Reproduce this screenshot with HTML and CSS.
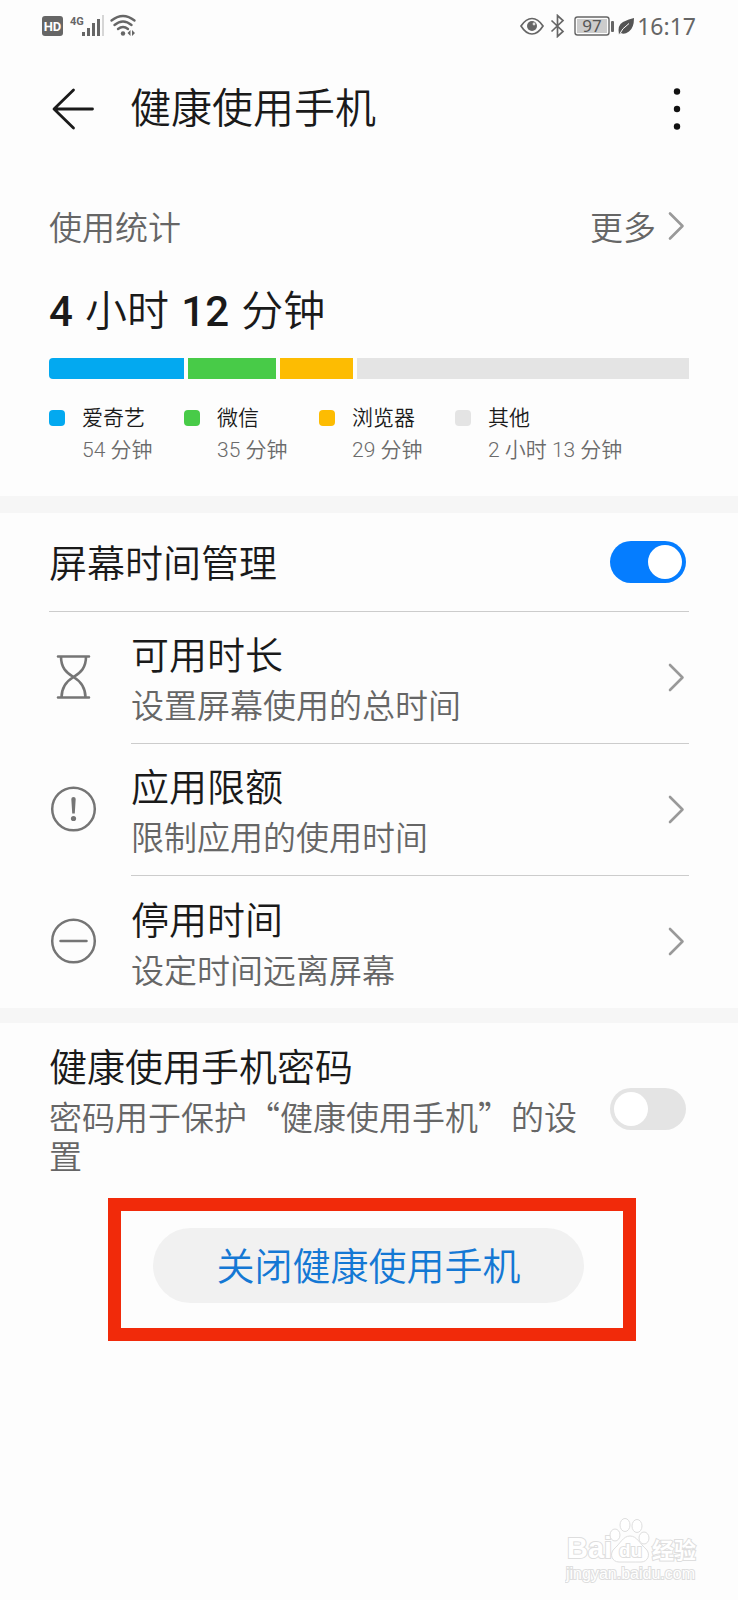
FILE: index.html
```html
<!DOCTYPE html>
<html lang="zh-CN">
<head>
<meta charset="utf-8">
<meta name="viewport" content="width=device-width, initial-scale=1">
<title>健康使用手机</title>
<link rel="stylesheet" href="styles.css">
</head>
<body>
<div class="screen">
  <div class="status">
    <div class="status-group">
      <svg class="icon" width="94" height="24" viewBox="0 0 94 24">
        <rect x="0" y="2" width="21" height="20" rx="3" fill="#666"/>
        <text class="hd-label" x="10.500" y="17" text-anchor="middle">HD</text>
        <text class="net-label" x="28" y="11">4G</text>
        <g fill="#666">
          <rect x="40" y="18" width="3" height="4"/><rect x="45" y="14" width="3" height="8"/>
          <rect x="50" y="9" width="3" height="13"/><rect x="55" y="5" width="3" height="17"/>
          <rect x="60" y="1" width="2" height="21" fill="#d6d6d6"/>
          <circle cx="81" cy="19.500" r="2.200"/>
          <path d="M88.500 16v6l-3-3zM90 16v6l3-3z"/>
        </g>
        <path d="M69.500 6.500q11.500-9 23 0M72.500 11q8.500-7 17 0M76 15q5-4 10 0" fill="none" stroke="#666" stroke-width="2.300" stroke-linecap="round"/>
      </svg>
    </div>
    <div class="status-group">
      <svg class="icon" width="115" height="24" viewBox="0 0 115 24">
        <g fill="none" stroke="#666" stroke-width="1.700">
          <path d="M1 12Q6 4.500 12 4.500T23 12Q18 20 12 20T1 12z"/>
          <path d="M31.500 6.500L43 17.500L37.500 22.500V1.500L43 6.500L31.500 17.500"/>
          <rect x="55" y="3" width="34" height="18" rx="2.500" stroke-width="1.400"/>
        </g>
        <circle cx="12" cy="12" r="5" fill="#666"/><circle cx="14" cy="10" r="1.400" fill="#ddd"/>
        <rect x="57" y="5" width="30" height="14" fill="#ccc"/>
        <text class="battery-label" x="72" y="18" text-anchor="middle">97</text>
        <rect x="91" y="7" width="3" height="11" rx="1" fill="#666"/>
        <path d="M99 21Q97 11 103 8T114 4Q114 14 109 17.500T101 19z" fill="#555"/>
        <path d="M98.500 22Q102 14 109 9.500" fill="none" stroke="#fdfdfd" stroke-width="1"/>
      </svg>
      <span class="clock">16:17</span>
    </div>
  </div>

  <header class="header">
    <button class="icon-button" type="button" aria-label="返回">
      <svg class="icon" width="46" height="44" viewBox="0 0 46 44" fill="none" stroke="#1a1a1a" stroke-width="2.800" stroke-linecap="round" stroke-linejoin="round"><path d="M24.500 3L5 22L24.500 41M5.500 22H43.500"/></svg>
    </button>
    <h1 class="title">健康使用手机</h1>
    <button class="icon-button" type="button" aria-label="更多选项">
      <svg class="icon" width="24" height="44" viewBox="0 0 24 44" fill="#111"><circle cx="12" cy="4.500" r="3.200"/><circle cx="12" cy="22" r="3.200"/><circle cx="12" cy="39.500" r="3.200"/></svg>
    </button>
  </header>

  <main>
    <section class="stats">
      <div class="stats-head">
        <h2 class="stats-label">使用统计</h2>
        <a class="more" href="#more">更多
          <svg class="icon" width="18" height="30" viewBox="0 0 18 30"><path class="chevron" d="M3 2.500L15.500 15L3 27.500"/></svg>
        </a>
      </div>
      <p class="total"><b>4</b> 小时 <b>12</b> 分钟</p>
      <div class="bar">
        <span class="segment blue" style="flex-grow: 135"></span>
        <span class="segment green" style="flex-grow: 88"></span>
        <span class="segment amber" style="flex-grow: 73"></span>
        <span class="segment gray" style="flex-grow: 332"></span>
      </div>
      <ul class="legend">
        <li class="legend-item"><i class="swatch blue"></i><span class="app">爱奇艺</span><span class="time">54 分钟</span></li>
        <li class="legend-item"><i class="swatch green"></i><span class="app">微信</span><span class="time">35 分钟</span></li>
        <li class="legend-item"><i class="swatch amber"></i><span class="app">浏览器</span><span class="time">29 分钟</span></li>
        <li class="legend-item"><i class="swatch gray"></i><span class="app">其他</span><span class="time">2 小时 13 分钟</span></li>
      </ul>
    </section>

    <section class="manage">
      <div class="manage-head">
        <label class="item-title" for="screen-time">屏幕时间管理</label>
        <input class="switch" id="screen-time" type="checkbox" role="switch" checked>
      </div>
      <a class="row" href="#duration">
        <svg class="icon" width="48" height="48" viewBox="0 0 48 48" fill="none" stroke="#757575" stroke-width="2.600" stroke-linecap="round"><path d="M9 2.500H40M9 43.500H40M12 2.500C12 13.500 17 18.500 24.500 23C32 27.500 36.500 33.500 36.500 43.500M37 2.500C37 13.500 32 18.500 24.500 23C17 27.500 12.500 33.500 12.500 43.500"/></svg>
        <span class="row-body">
          <span class="row-text"><span class="item-title">可用时长</span><span class="item-note">设置屏幕使用的总时间</span></span>
          <svg class="icon" width="18" height="30" viewBox="0 0 18 30"><path class="chevron" d="M3 2L15.500 14.500L3 27"/></svg>
        </span>
      </a>
      <a class="row" href="#limits">
        <svg class="icon" width="48" height="48" viewBox="0 0 48 48" fill="none" stroke="#757575" stroke-width="2.500"><circle cx="24.500" cy="23" r="21.300"/><path d="M22.300 13Q22.300 11 24.500 11T26.700 13L25.800 27.500H23.200z" fill="#757575" stroke="none"/><circle cx="24.500" cy="32.500" r="2.600" fill="#757575" stroke="none"/></svg>
        <span class="row-body">
          <span class="row-text"><span class="item-title">应用限额</span><span class="item-note">限制应用的使用时间</span></span>
          <svg class="icon" width="18" height="30" viewBox="0 0 18 30"><path class="chevron" d="M3 2L15.500 14.500L3 27"/></svg>
        </span>
      </a>
      <a class="row" href="#downtime">
        <svg class="icon" width="48" height="48" viewBox="0 0 48 48" fill="none" stroke="#757575" stroke-width="2.500" stroke-linecap="round"><circle cx="24.500" cy="23" r="21.300"/><path d="M11.500 23H37.500"/></svg>
        <span class="row-body">
          <span class="row-text"><span class="item-title">停用时间</span><span class="item-note">设定时间远离屏幕</span></span>
          <svg class="icon" width="18" height="30" viewBox="0 0 18 30"><path class="chevron" d="M3 2L15.500 14.500L3 27"/></svg>
        </span>
      </a>
    </section>

    <section class="password">
      <label class="row-text" for="password">
        <span class="item-title">健康使用手机密码</span>
        <span class="item-note">密码用于保护“健康使用手机”的设置</span>
      </label>
      <input class="switch" id="password" type="checkbox" role="switch">
    </section>

    <div class="highlight">
      <button class="close-button" type="button">关闭健康使用手机</button>
    </div>
  </main>

  <svg class="watermark" width="140" height="70" viewBox="0 0 140 70">
    <text class="wm-big" x="2" y="42">Bai</text>
    <path d="M65 20C72 20 75 28 81 33C86 38 83 46 76 46C70 46 60 46 54 46C47 46 44 38 49 33C55 28 58 20 65 20z"/>
    <ellipse cx="50" cy="19" rx="5" ry="6"/><ellipse cx="60" cy="9" rx="5" ry="6.500"/><ellipse cx="72" cy="10" rx="5" ry="6.500"/><ellipse cx="79" cy="22" rx="5" ry="6"/>
    <text class="wm-du" x="54" y="41">du</text>
    <text class="wm-cjk" x="87" y="42">经验</text>
    <text class="wm-url" x="1" y="63">jingyan.baidu.com</text>
  </svg>
</div>
</body>
</html>
```
FILE: styles.css
```css
* {
  box-sizing: border-box;
}

body {
  margin: 0;
  background: #fdfdfd;
  color: #1a1a1a;
  font-family: Roboto, "Noto Sans CJK SC", sans-serif;
  font-weight: 350;
}

h1, h2, p, ul {
  margin: 0;
  padding: 0;
  font-weight: 350;
}

a {
  color: inherit;
  text-decoration: none;
}

.screen {
  position: relative;
  min-height: 100vh;
}

.icon {
  display: block;
  flex: none;
}

.chevron {
  fill: none;
  stroke: #999;
  stroke-width: 2.6;
  stroke-linecap: round;
  stroke-linejoin: round;
}

/* Status bar */
.status {
  display: flex;
  justify-content: space-between;
  height: 52px;
  padding: 0 42px;
}

.status-group {
  display: flex;
  align-items: center;
  gap: 2px;
}

.clock {
  color: #666;
  font: 400 23px/24px "Noto Sans", sans-serif;
}

.hd-label {
  fill: #fff;
  font: 700 13px Roboto, sans-serif;
}

.net-label {
  fill: #666;
  font: 700 11px Roboto, sans-serif;
}

.battery-label {
  fill: #555;
  font: 400 17px "Noto Sans", sans-serif;
}

/* Title bar */
.header {
  display: flex;
  align-items: center;
  height: 114px;
  padding: 0 49px;
}

.icon-button {
  padding: 0;
  border: 0;
  background: none;
}

.title {
  flex: 1;
  padding-left: 35px;
  font-size: 41px;
  line-height: 50px;
}

/* Usage statistics */
.stats {
  padding: 35px 49px 30px;
  border-bottom: 17px solid #f6f6f6;
}

.stats-head {
  display: flex;
  align-items: center;
  justify-content: space-between;
  height: 50px;
  margin-bottom: 36px;
  color: #666;
  font-size: 33px;
}

.stats-label {
  font-size: 33px;
}

.more {
  display: flex;
  align-items: center;
  gap: 11px;
  padding-right: 4px;
}

.total {
  font-size: 42px;
  line-height: 50px;
}

.total b {
  margin-right: 2px;
  font-weight: 500;
}

.total b + b {
  margin-left: 2px;
}

.bar {
  display: flex;
  gap: 4px;
  height: 21px;
  margin: 21px 0 23px;
  border-radius: 4px 0 0 4px;
  overflow: hidden;
}

.segment {
  flex-basis: 0;
}

.blue { background: #03a9f0; }
.green { background: #48cb48; }
.amber { background: #fdbc02; }
.gray { background: #e4e4e4; }

.legend {
  display: grid;
  grid-template-columns: 135fr 135fr 136fr 234fr;
  list-style: none;
  font-size: 21px;
  line-height: 32px;
}

.legend-item {
  display: grid;
  grid-template-columns: 16px 1fr;
  column-gap: 17px;
  align-items: center;
  white-space: nowrap;
}

.swatch {
  height: 16px;
  border-radius: 4px;
}

.time {
  grid-column: 2;
  color: #6b6b6b;
}

/* Settings rows */
.item-title {
  font-size: 38px;
  line-height: 50px;
}

.item-note {
  color: #666;
  font-family: "Noto Sans CJK SC", sans-serif;
  font-size: 33px;
  line-height: 39px;
}

.row-text {
  display: flex;
  flex: 1;
  flex-direction: column;
  gap: 4px;
}

.manage {
  padding: 0 49px;
  border-bottom: 15px solid #f6f6f6;
}

.manage-head {
  display: flex;
  align-items: center;
  justify-content: space-between;
  min-height: 99px;
  padding-right: 3px;
  border-bottom: 1px solid #ccc;
}

.manage-head .item-title {
  padding-top: 4px;
}

.row {
  display: flex;
  align-items: center;
  gap: 34px;
}

.row-body {
  display: flex;
  flex: 1;
  align-items: center;
  min-height: 132px;
  padding-right: 4px;
  border-bottom: 1px solid #ccc;
}

.row:last-child .row-body {
  border-bottom: 0;
}

.switch {
  appearance: none;
  flex: none;
  width: 76px;
  height: 42px;
  margin: 0;
  padding: 4px;
  border-radius: 21px;
  background: #e4e4e4;
}

.switch::before {
  display: block;
  width: 34px;
  height: 34px;
  border-radius: 50%;
  background: #fff;
  content: "";
}

.switch:checked {
  background: #057dff;
}

.switch:checked::before {
  margin-left: auto;
}

.password {
  display: flex;
  align-items: center;
  gap: 32px;
  padding: 20px 52px 23px 49px;
}

/* Close action */
.highlight {
  margin: 0 102px 0 108px;
  padding: 17px 39px 25px 32px;
  border: 13px solid #f12a0a;
}

.close-button {
  display: block;
  width: 100%;
  padding: 14px 0 11px;
  border: 0;
  border-radius: 38px;
  background: #f1f1f1;
  color: #1478d4;
  font: inherit;
  font-size: 38px;
  line-height: 50px;
}

/* Watermark over the bottom corner */
.watermark {
  position: absolute;
  right: 33px;
  bottom: 14px;
  fill: #fff;
  stroke: #dedede;
  stroke-width: 1;
}

.watermark text {
  stroke-width: 2;
  paint-order: stroke;
}

.wm-big { font: 700 29px "Liberation Sans", sans-serif; }
.wm-du { font: 700 19px "Liberation Sans", sans-serif; }
.wm-cjk { font: 700 22px "Noto Sans CJK SC", sans-serif; }
.wm-url { font: 400 16px "Liberation Sans", sans-serif; }
```
